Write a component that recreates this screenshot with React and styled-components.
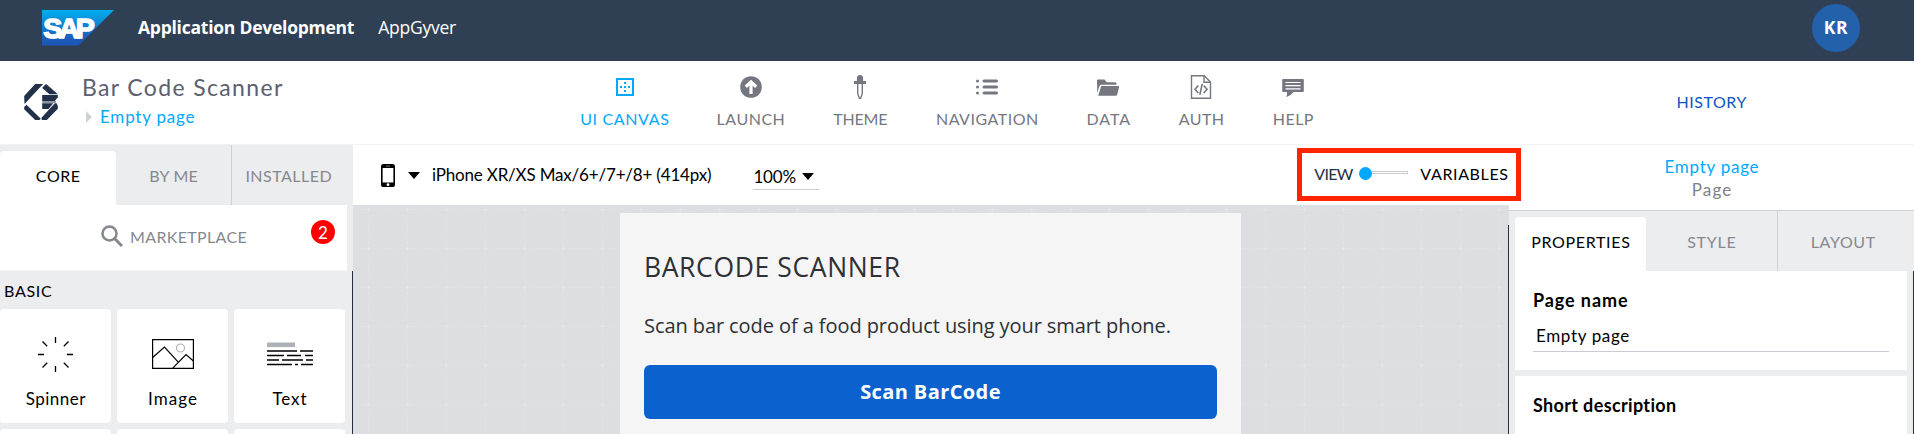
import React from "react";
import styled, { createGlobalStyle, css } from "styled-components";

const GlobalStyle = createGlobalStyle`
  * { box-sizing: border-box; }
  body { margin: 0; background: #fff; font-family: Lato, "Liberation Sans", sans-serif; color: #000; }
  #root { height: 434px; overflow: hidden; }
`;

/* Tracking without the trailing gap, so centred labels stay centred. */
const tracking = css`
  letter-spacing: ${(p) => p.$ls || 0}px;
  margin-right: ${(p) => -(p.$ls || 0)}px;
  white-space: nowrap;
`;

const Page = styled.div`
  position: relative;
  width: 1914px;
  height: 434px;
  display: flex;
  flex-direction: column;
  overflow: hidden;
`;

/* ---------- SAP header ---------- */
const ShellBar = styled.header`
  flex: none;
  height: 61px;
  padding: 0 54px 5px 42px;
  display: flex;
  align-items: center;
  background: #2f4055;
  color: #fff;
  font-family: "Open Sans", sans-serif;
`;
const ShellTitle = styled.span`
  margin-left: 24px;
  padding-bottom: 2px;
  font-size: 17.5px;
  line-height: 24px;
  font-weight: ${(p) => (p.$bold ? 700 : 400)};
  letter-spacing: ${(p) => p.$ls}px;
  white-space: nowrap;
`;
const Avatar = styled.div`
  width: 48px;
  height: 48px;
  margin-left: auto;
  padding-bottom: 2px;
  display: flex;
  align-items: center;
  justify-content: center;
  border-radius: 50%;
  background: #2361ab;
  font-size: 17.5px;
  font-weight: 700;
  letter-spacing: 0.6px;
`;

/* ---------- App bar ---------- */
const AppBar = styled.div`
  flex: none;
  height: 84px;
  display: flex;
  align-items: flex-start;
  border-bottom: 1px solid #f1f2f3;
`;
const Brand = styled.div`
  width: 581px;
  display: flex;
  padding: 14px 0 0 24px;
`;
const BrandMark = styled.svg`
  flex: none;
  margin-top: 9px;
`;
const BrandText = styled.div`
  margin-left: 24px;
`;
const ProjectName = styled.div`
  height: 24px;
  line-height: 24px;
  font-size: 23px;
  color: #5c6070;
  ${tracking}
`;
const Crumb = styled.div`
  display: flex;
  align-items: center;
  gap: 8px;
  margin: 7px 0 0 4px;
  height: 21px;
  font-size: 17px;
  color: #00a8ff;
`;
const CrumbText = styled.span`
  line-height: 21px;
  ${tracking}
`;
const Nav = styled.nav`
  display: flex;
  gap: 49.7px;
  padding-top: 14px;
`;
const NavItem = styled.div`
  width: ${(p) => p.$w}px;
  display: flex;
  flex-direction: column;
  align-items: center;
  color: ${(p) => (p.$active ? "#00a8ff" : "#747780")};
`;
const NavLabel = styled.span`
  margin-top: 10px;
  font-size: 16px;
  line-height: 20px;
  ${tracking}
`;
const History = styled.div`
  margin-left: auto;
  width: 405px;
  padding: 31px 0 0;
  display: flex;
  justify-content: center;
  font-size: 16px;
  line-height: 20px;
  color: #0f54c0;
`;

/* ---------- Workspace ---------- */
const Workspace = styled.div`
  flex: 1;
  display: flex;
  min-height: 0;
`;
const LeftPanel = styled.aside`
  flex: none;
  width: 353px;
  background: #ecedef;
  display: flex;
  flex-direction: column;
`;
const Tabs = styled.div`
  flex: none;
  height: 60px;
  display: flex;
  padding-left: ${(p) => p.$inset || 0}px;
`;
const Tab = styled.div`
  width: ${(p) => p.$w}px;
  margin-top: ${(p) => (p.$active ? 6 : 0)}px;
  padding-bottom: ${(p) => (p.$active ? 6 : 0)}px;
  display: flex;
  align-items: center;
  justify-content: center;
  border-right: ${(p) => (p.$divider ? "1px solid #cdd0d5" : "none")};
  border-radius: ${(p) => (p.$active ? "4px 4px 0 0" : 0)};
  background: ${(p) => (p.$active ? "#fff" : "transparent")};
  color: ${(p) => (p.$active ? "#000" : "#85888f")};
  font-size: 16px;
`;
const Tracked = styled.span`
  ${tracking}
`;
const Marketplace = styled.div`
  position: relative;
  flex: none;
  width: 347px;
  height: 66px;
  padding: 0 0 3px 101px;
  display: flex;
  align-items: center;
  gap: 7px;
  background: #fff;
  border-bottom: 1px solid #f3f4f5;
  color: #85888f;
  font-size: 16px;
`;
const Badge = styled.span`
  position: absolute;
  left: 311px;
  top: 15px;
  width: 24px;
  height: 24px;
  border-radius: 50%;
  background: #f00;
  color: #fff;
  font-size: 17px;
  line-height: 26px;
  text-align: center;
`;
const Palette = styled.div`
  flex: 1;
  border-right: 1px solid #232f43;
`;
const SectionTitle = styled.div`
  height: 38px;
  padding-left: 4px;
  font-size: 16px;
  line-height: 40px;
  ${tracking}
`;
const CardGrid = styled.div`
  display: grid;
  grid-template-columns: repeat(3, 111px);
  grid-auto-rows: 114px;
  gap: 6px;
`;
const Card = styled.div`
  display: flex;
  flex-direction: column;
  align-items: center;
  padding-top: 30px;
  border-radius: 4px;
  background: #fff;
`;
const CardIcon = styled.div`
  height: 30px;
  display: flex;
  align-items: center;
  justify-content: center;
`;
const CardLabel = styled.span`
  margin-top: 20px;
  font-size: 17px;
  line-height: 20px;
  ${tracking}
`;

/* ---------- Centre ---------- */
const Center = styled.main`
  flex: none;
  width: 1156px;
  display: flex;
  flex-direction: column;
`;
const Toolbar = styled.div`
  flex: none;
  height: 60px;
  display: flex;
  align-items: center;
  padding: 0 1px 0 28px;
  background: #fff;
`;
const DeviceName = styled.span`
  margin-left: 12px;
  padding-bottom: 1px;
  font-size: 17px;
  line-height: 22px;
  letter-spacing: -0.18px;
  white-space: nowrap;
`;
const Caret = styled.i`
  width: 0;
  height: 0;
  border: 6px solid transparent;
  border-top: 7px solid #000;
  border-bottom: 0;
  margin-left: ${(p) => p.$ml}px;
`;
const Zoom = styled.div`
  width: 66px;
  height: 26px;
  margin: 4px 0 0 42px;
  display: flex;
  align-items: center;
  border-bottom: 1px solid #cfcfd2;
  font-size: 17px;
  letter-spacing: -0.19px;
`;
const ModeSwitch = styled.div`
  margin-left: auto;
  padding-bottom: 3px;
  display: flex;
  align-items: center;
  font-size: 16px;
  line-height: 20px;
`;
const ModeLabel = styled.span`
  color: ${(p) => p.$color};
  ${tracking}
`;
const Toggle = styled.div`
  display: flex;
  align-items: center;
  margin: 0 12px 0 6px;
`;
const Knob = styled.i`
  width: 13px;
  height: 13px;
  border-radius: 50%;
  background: #00a8ff;
`;
const Track = styled.i`
  width: 36px;
  height: 3px;
  margin-top: -2px;
  border: 1px solid #c9cbcf;
  border-left: 0;
`;
const Canvas = styled.div`
  position: relative;
  flex: 1;
  display: flex;
  background: #dddee2;
`;
const CanvasGrid = styled.svg`
  position: absolute;
  left: 0;
  top: 0;
`;
const CanvasEdge = styled.i`
  align-self: stretch;
  width: 1px;
  margin: 20px 0 0 auto;
  background: #232f43;
`;
const Phone = styled.section`
  position: relative;
  width: 621px;
  margin: 8px 0 0 267px;
  padding: 37px 24px 0;
  background: #f5f5f5;
  color: #2d3034;
  font-family: "Open Sans", sans-serif;
`;
const PhoneTitle = styled.h1`
  margin: 0;
  font-size: 26.5px;
  font-weight: 400;
  line-height: 34px;
  letter-spacing: 0.62px;
  white-space: nowrap;
`;
const PhoneText = styled.p`
  margin: 28px 0 0;
  font-size: 20px;
  line-height: 28px;
  letter-spacing: -0.08px;
  white-space: nowrap;
`;
const PhoneButton = styled.div`
  height: 54px;
  margin-top: 25px;
  border-radius: 6px;
  background: #0b62ce;
  color: #fff;
  font-size: 20px;
  font-weight: 700;
  line-height: 53px;
  text-align: center;
  letter-spacing: 0.4px;
`;

/* ---------- Right panel ---------- */
const RightPanel = styled.aside`
  flex: 1;
  display: flex;
  flex-direction: column;
  background: #ecedef;
`;
const Selection = styled.div`
  flex: none;
  height: 66px;
  padding-top: 10px;
  display: flex;
  flex-direction: column;
  align-items: center;
  background: #fff;
  border-bottom: 1px solid #cdd0d5;
  font-size: 17px;
  line-height: 23px;
`;
const SelectionLine = styled.span`
  color: ${(p) => p.$color};
  ${tracking}
`;
const Properties = styled.div`
  flex: 1;
  padding: 0 6px 0 6px;
  display: flex;
  flex-direction: column;
  gap: 6px;
  border-right: 1px solid #232f43;
`;
const PropertyCard = styled.div`
  flex: none;
  height: 99px;
  padding: 19px 18px 0;
  background: #fff;
`;
const PropertyName = styled.div`
  font-size: 18px;
  font-weight: 700;
  line-height: 20px;
  ${tracking}
`;
const PropertyInput = styled.div`
  margin-top: 13px;
  height: 29px;
  padding-left: 3px;
  border-bottom: 1px solid #cbcbd6;
  font-size: 17px;
  line-height: 26px;
  letter-spacing: 0.65px;
`;

/* Annotation frame drawn over both the toolbar and the right panel. */
const Highlight = styled.div`
  position: absolute;
  left: 1297px;
  top: 148px;
  width: 224px;
  height: 53px;
  border: 5px solid #ff2400;
`;

/* ---------- Drawings ---------- */
const SapLogo = () => (
  <svg width="72" height="36" viewBox="0 0 72 36">
    <defs>
      <linearGradient id="sap" x1="0" y1="0" x2="0" y2="1">
        <stop offset="0" stopColor="#00aeef" />
        <stop offset="0.25" stopColor="#0b95de" />
        <stop offset="0.8" stopColor="#1b5cbd" />
        <stop offset="1" stopColor="#1c56b8" />
      </linearGradient>
    </defs>
    <path d="M0 0H72L36.5 35.5H0Z" fill="url(#sap)" />
    <text x="1.2" y="28" fontSize="28.5" fontWeight="700" fontFamily="Liberation Sans, sans-serif" fill="#fff" stroke="#fff" strokeWidth="1.5" textLength="51.5" lengthAdjust="spacing">SAP</text>
  </svg>
);

const GyverMark = () => (
  <BrandMark width="34" height="36" viewBox="0 0 101 108" fill="#22304a">
    <path d="M33 0H57L1 60L0 36Z" />
    <path d="M0 69L7 62L50 104L46 108H33L0 76Z" />
    <path d="M60 5L66 0L101 31H76L54 12Z" />
    <path d="M54 33H101V40L92 51H54Z" />
    <path d="M54 51H95V57H54Z" fill="#8d97a3" />
    <path d="M54 58H87L73 75H54Z" />
    <path d="M92 58H97L101 66V74L68 108H53L52 101Z" />
  </BrandMark>
);

const icons = {
  canvas: (
    <svg width="24" height="24" viewBox="0 0 24 24" fill="currentColor">
      <path d="M4 4H20V20H4Z" fill="none" stroke="currentColor" strokeWidth="2" />
      <path d="M11 7h2v2h-2zM11 11h2v2h-2zM11 15h2v2h-2zM7 11h2v2H7zM15 11h2v2h-2z" />
    </svg>
  ),
  launch: (
    <svg width="24" height="24" viewBox="0 0 24 24">
      <circle cx="12" cy="12" r="10.8" fill="currentColor" />
      <path d="M12 19V8M6.8 11.8L12 7l5.2 4.8" fill="none" stroke="#fff" strokeWidth="3.2" />
    </svg>
  ),
  theme: (
    <svg width="24" height="24" viewBox="0 0 24 24" fill="currentColor">
      <path d="M8.9 6V3.2Q9 0 12 0t3.1 3.2V6H18v3H6V6Z" />
      <path d="M9.7 9v9.5L11.4 23.5h1.2L14.3 18.500V9" fill="none" stroke="currentColor" strokeWidth="1.4" />
    </svg>
  ),
  navigation: (
    <svg width="24" height="24" viewBox="0 0 24 24" fill="none" stroke="currentColor" strokeWidth="3" strokeLinecap="round">
      <path d="M9 6H21.500M9 12H21.500M9 18H21.500" />
      <path d="M2.500 6h.01M2.500 12h.01M2.500 18h.01" />
    </svg>
  ),
  data: (
    <svg width="24" height="24" viewBox="0 0 24 24" fill="currentColor">
      <path d="M1 5.500Q1 4.500 2 4.500H8.500L10.800 7.200H19Q20.500 7.200 20.500 8.800V9.800H5.500Q4 9.800 3.500 11L1.300 18Z" />
      <path d="M5.200 11H22.300Q23.400 11 23.100 12.200L21.200 19.500Q20.900 20.800 19.700 20.800H2.200Z" />
    </svg>
  ),
  auth: (
    <svg width="22" height="24" viewBox="0 0 22 24" fill="none" stroke="currentColor" strokeWidth="1.4">
      <path d="M1.500 .8H14.200L20.500 7V23.300H1.500Z" />
      <path d="M14 .8V7.200H20.500" />
      <path d="M8.300 10.500L5 14.300l3.300 3.800M13.700 10.500L17 14.300l-3.300 3.800M12.200 8.800L9.800 19.800" strokeWidth="1.600" />
    </svg>
  ),
  help: (
    <svg width="24" height="24" viewBox="0 0 24 24">
      <path d="M2 4H22Q22.800 4 22.800 5V16Q22.800 17 22 17H12.500Q9.500 21 5 22Q6.500 20 6 17H2Q1.200 17 1.200 16V5Q1.200 4 2 4Z" fill="currentColor" />
      <path d="M4.500 7.500H19.500M4.500 10.700H19.500M4.500 13.800H19.500" stroke="#fff" strokeWidth="1.200" />
    </svg>
  ),
};

const PhoneIcon = () => (
  <svg width="14" height="23" viewBox="0 0 14 23">
    <rect width="14" height="23" rx="2.600" />
    <path d="M1.600 4H12.400V18.500H1.600Z" fill="#fff" />
    <path d="M5 2.100H9" stroke="#777" strokeWidth="1" />
    <circle cx="7" cy="20.700" r="1.400" fill="#fff" />
  </svg>
);

const SearchIcon = () => (
  <svg width="22" height="22" viewBox="0 0 22 22" fill="none" stroke="currentColor">
    <circle cx="8.500" cy="8.500" r="7" strokeWidth="2.600" />
    <path d="M13.500 13.500L21 21" strokeWidth="3" />
  </svg>
);

const SpinnerIcon = () => (
  <svg width="35" height="35" viewBox="0 0 35 35" fill="none" stroke="#000" strokeWidth="1.300">
    <path d="M17.500 0V6M17.500 29V35M0 17.500H6M29 17.500H35M4.500 4.500l4.700 4.700M30.500 4.500l-4.700 4.700M4.500 30.500l4.700-4.700M30.500 30.500l-4.700-4.700" />
  </svg>
);

const ImageIcon = () => (
  <svg width="42" height="30" viewBox="0 0 42 30" fill="none" stroke="#000" strokeWidth="1.200">
    <path d="M.6 .6H41.400V29.400H.6Z" />
    <circle cx="28.500" cy="9" r="4" stroke="#aeb1b7" />
    <path d="M.6 18.500L12.500 8L26 22.800M20.500 29.400L34 15.500L41.400 22" />
  </svg>
);

const TextIcon = () => (
  <svg width="46" height="24" viewBox="0 0 46 24" fill="none" stroke="#000" strokeWidth="1.500">
    <path d="M0 2.800H28" stroke="#aeb1b7" strokeWidth="4.600" />
    <path d="M0 9H30M33 9H46M0 13.500H17M20 13.500H34M38 13.500H46M0 18H12M15 18H36M39 18H46M0 22.500H25M28 22.500H31M34 22.500H46" />
  </svg>
);

const navItems = [
  { icon: "canvas", label: "UI CANVAS", w: 87, ls: 0.64, active: true },
  { icon: "launch", label: "LAUNCH", w: 66, ls: 0.5 },
  { icon: "theme", label: "THEME", w: 54, ls: -0.19 },
  { icon: "navigation", label: "NAVIGATION", w: 100, ls: 0.5 },
  { icon: "data", label: "DATA", w: 43, ls: 1 },
  { icon: "auth", label: "AUTH", w: 44, ls: 0.4 },
  { icon: "help", label: "HELP", w: 40, ls: 0.44 },
];

const components = [
  { label: "Spinner", ls: 0.48, Icon: SpinnerIcon },
  { label: "Image", ls: 1.1, Icon: ImageIcon },
  { label: "Text", ls: 0.9, Icon: TextIcon },
];

export default function App() {
  return (
    <Page>
      <GlobalStyle />
      <ShellBar>
        <SapLogo />
        <ShellTitle $bold $ls={-0.24}>Application Development</ShellTitle>
        <ShellTitle $ls={-0.25}>AppGyver</ShellTitle>
        <Avatar>KR</Avatar>
      </ShellBar>

      <AppBar>
        <Brand>
          <GyverMark />
          <BrandText>
            <ProjectName $ls={1.36}>Bar Code Scanner</ProjectName>
            <Crumb>
              <svg width="6" height="12" viewBox="0 0 6 12"><path d="M0 0L6 6L0 12Z" fill="#cfd2d8" /></svg>
              <CrumbText $ls={0.79}>Empty page</CrumbText>
            </Crumb>
          </BrandText>
        </Brand>
        <Nav>
          {navItems.map((n) => (
            <NavItem key={n.label} $w={n.w} $active={n.active}>
              {icons[n.icon]}
              <NavLabel $ls={n.ls}>{n.label}</NavLabel>
            </NavItem>
          ))}
        </Nav>
        <History><Tracked $ls={0.55}>HISTORY</Tracked></History>
      </AppBar>

      <Workspace>
        <LeftPanel>
          <Tabs>
            <Tab $w={116} $active><Tracked $ls={0.57}>CORE</Tracked></Tab>
            <Tab $w={116} $divider><Tracked $ls={0.3}>BY ME</Tracked></Tab>
            <Tab $w={113}><Tracked $ls={0.47}>INSTALLED</Tracked></Tab>
          </Tabs>
          <Marketplace>
            <SearchIcon />
            <Tracked $ls={0.35}>MARKETPLACE</Tracked>
            <Badge>2</Badge>
          </Marketplace>
          <Palette>
            <SectionTitle $ls={0.7}>BASIC</SectionTitle>
            <CardGrid>
              {components.map(({ label, ls, Icon }) => (
                <Card key={label}>
                  <CardIcon><Icon /></CardIcon>
                  <CardLabel $ls={ls}>{label}</CardLabel>
                </Card>
              ))}
              <Card />
              <Card />
              <Card />
            </CardGrid>
          </Palette>
        </LeftPanel>

        <Center>
          <Toolbar>
            <PhoneIcon />
            <Caret $ml={13} />
            <DeviceName>iPhone XR/XS Max/6+/7+/8+ (414px)</DeviceName>
            <Zoom>100%<Caret $ml={6} /></Zoom>
            <ModeSwitch>
              <ModeLabel $ls={-0.7} $color="#232f43">VIEW</ModeLabel>
              <Toggle><Knob /><Track /></Toggle>
              <ModeLabel $ls={0.63} $color="#000">VARIABLES</ModeLabel>
            </ModeSwitch>
          </Toolbar>
          <Canvas>
            <CanvasGrid width="1156" height="229">
              <defs>
                <pattern id="cells" width="39" height="39" patternUnits="userSpaceOnUse" x="-4" y="-15">
                  <path d="M0 19.500H39M19.500 0V39" stroke="#e1e2e6" strokeWidth="1" strokeDasharray="3 3" />
                  <path d="M17 19.500H22M19.500 17V22" stroke="#e5e6e9" strokeWidth="1.200" />
                </pattern>
              </defs>
              <rect width="1156" height="229" fill="url(#cells)" />
            </CanvasGrid>
            <Phone>
              <PhoneTitle>BARCODE SCANNER</PhoneTitle>
              <PhoneText>Scan bar code of a food product using your smart phone.</PhoneText>
              <PhoneButton>Scan BarCode</PhoneButton>
            </Phone>
            <CanvasEdge />
          </Canvas>
        </Center>

        <RightPanel>
          <Selection>
            <SelectionLine $ls={0.75} $color="#00a8ff">Empty page</SelectionLine>
            <SelectionLine $ls={1.2} $color="#7f828a">Page</SelectionLine>
          </Selection>
          <Tabs $inset={6}>
            <Tab $w={131} $active><Tracked $ls={0.67}>PROPERTIES</Tracked></Tab>
            <Tab $w={132} $divider><Tracked $ls={0.79}>STYLE</Tracked></Tab>
            <Tab $w={130}><Tracked $ls={0.62}>LAYOUT</Tracked></Tab>
          </Tabs>
          <Properties>
            <PropertyCard>
              <PropertyName $ls={0.9}>Page name</PropertyName>
              <PropertyInput>Empty page</PropertyInput>
            </PropertyCard>
            <PropertyCard>
              <PropertyName $ls={0.35}>Short description</PropertyName>
            </PropertyCard>
          </Properties>
        </RightPanel>
      </Workspace>
      <Highlight />
    </Page>
  );
}
